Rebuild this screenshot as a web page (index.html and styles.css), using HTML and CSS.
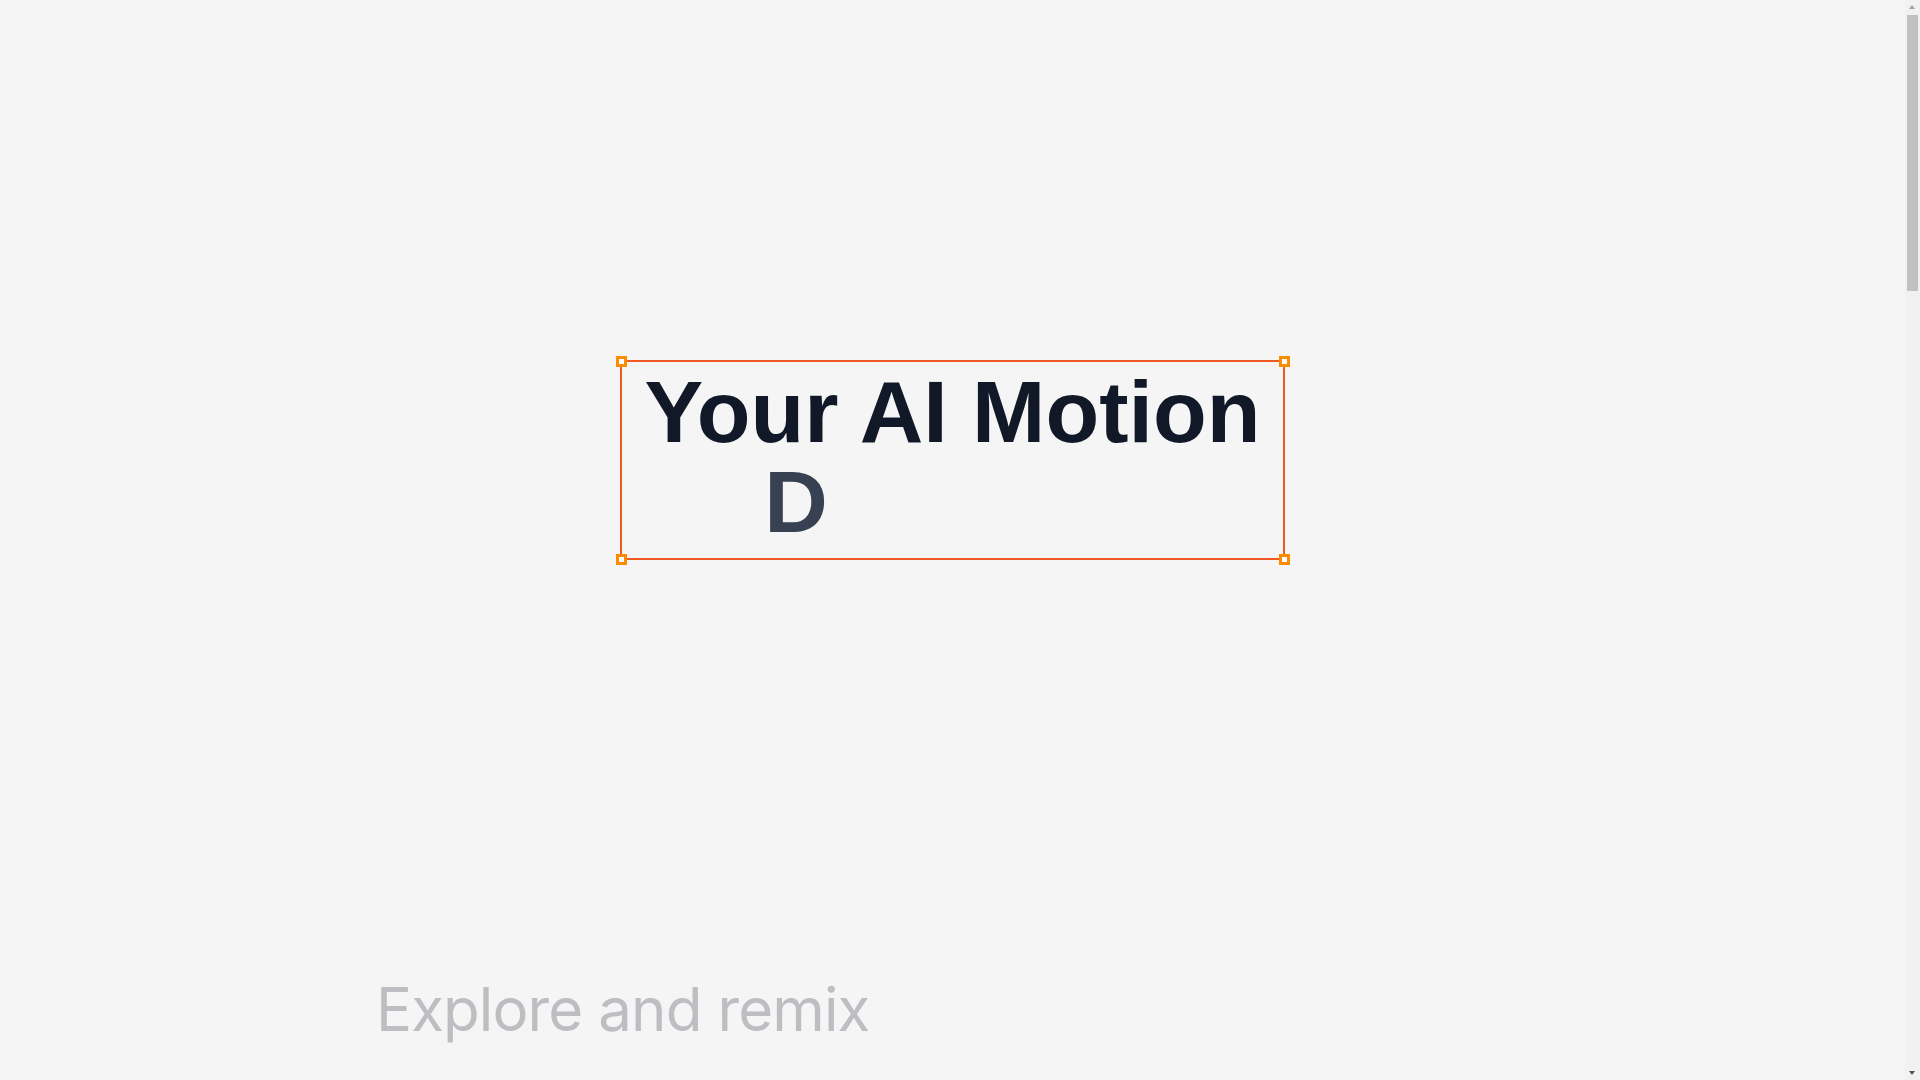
FILE: index.html
```html
<!DOCTYPE html>
<html lang="en">
<head>
<meta charset="utf-8">
<title>Your AI Motion Designer</title>
<link rel="stylesheet" href="styles.css">
</head>
<body>
  <main class="page">
    <section class="hero">
      <div class="selection">
        <span class="handle handle-tl"></span>
        <span class="handle handle-tr"></span>
        <span class="handle handle-bl"></span>
        <span class="handle handle-br"></span>
        <h1 class="title">
          <span class="line line-1">Your AI Motion</span>
          <span class="line line-2"><span class="typed">D</span><span class="pending">esigner</span></span>
        </h1>
      </div>
    </section>
    <section class="explore">
      <h2 class="explore-title">Explore and remix</h2>
    </section>
  </main>
  <div class="scrollbar" aria-hidden="true">
    <span class="scroll-btn scroll-up"></span>
    <span class="scroll-track"><span class="scroll-thumb"></span></span>
    <span class="scroll-btn scroll-down"></span>
  </div>
</body>
</html>
```

FILE: styles.css
```css
html, body {
  margin: 0;
  padding: 0;
  background: #f5f5f5;
}

html::-webkit-scrollbar,
body::-webkit-scrollbar {
  width: 0;
  height: 0;
  display: none;
}

html {
  scrollbar-width: none;
}

body {
  padding-right: 15px;
}

.page {
  min-height: 4110px;
}

.hero {
  height: 920px;
  display: flex;
  align-items: center;
  justify-content: center;
}

.selection {
  position: relative;
  box-sizing: border-box;
  width: 665px;
  height: 200px;
  border: 2px solid #f05a22;
  padding-top: 5px;
}

.handle {
  position: absolute;
  box-sizing: border-box;
  width: 11px;
  height: 11px;
  background: #ffffff;
  border: 3px solid #fb8c00;
  z-index: 2;
}

.handle-tl { left: -6.5px; top: -6.5px; }
.handle-tr { right: -6.5px; top: -6.5px; }
.handle-bl { left: -6.5px; bottom: -6.5px; }
.handle-br { right: -6.5px; bottom: -6.5px; }

.title {
  margin: 0;
  font-family: "Liberation Sans", Arial, sans-serif;
  font-weight: 700;
  font-size: 88px;
  line-height: 90px;
  text-align: center;
  color: #111827;
}

.line {
  display: block;
  white-space: nowrap;
}

.line-2 .typed {
  color: #374151;
}

.line-2 .pending {
  opacity: 0;
}

.explore {
  width: 1153px;
  margin: 0 auto;
  padding-top: 53px;
}

.explore-title {
  margin: 0;
  font-family: Inter, "Noto Sans", sans-serif;
  font-weight: 400;
  font-size: 60px;
  line-height: 72px;
  color: #bdbec2;
  letter-spacing: -0.9px;
}

/* browser scrollbar, as in the screenshot */
.scrollbar {
  position: fixed;
  top: 0;
  right: 0;
  width: 15px;
  height: 100vh;
  background: #f1f1f1;
  display: flex;
  flex-direction: column;
}

.scroll-btn {
  height: 15px;
  flex: 0 0 15px;
  position: relative;
}

.scroll-btn::after {
  content: "";
  position: absolute;
  left: 4px;
  width: 0;
  height: 0;
  border-left: 3.5px solid transparent;
  border-right: 3.5px solid transparent;
}

.scroll-up::after {
  top: 5px;
  border-bottom: 4px solid #a3a3a3;
}

.scroll-down::after {
  top: 6px;
  border-top: 4px solid #505050;
}

.scroll-track {
  flex: 1;
  padding: 0 2px;
}

.scroll-thumb {
  display: block;
  height: 276px;
  background: #c1c1c1;
}
```
